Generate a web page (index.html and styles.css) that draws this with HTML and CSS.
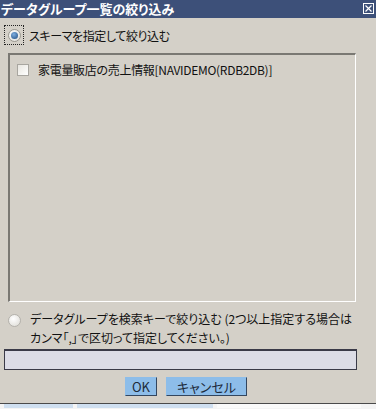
FILE: index.html
```html
<!DOCTYPE html>
<html lang="ja">
<head>
    <meta charset="UTF-8">
    <meta name="viewport" content="width=device-width, initial-scale=1.0">
    <title>データグループ一覧の絞り込み</title>
    <link rel="stylesheet" href="styles.css">
</head>
<body>
<div class="dialog">
    <div class="titlebar">
        <span class="title">データグループ一覧の絞り込み</span>
        <span class="close">
            <svg width="11" height="11" viewBox="0 0 11 11">
                <rect x="0.5" y="0.5" width="10" height="10" fill="none" stroke="#fff" stroke-width="1"/>
                <path d="M2.5 2.5 L8.5 8.5 M8.5 2.5 L2.5 8.5" stroke="#fff" stroke-width="1.2"/>
            </svg>
        </span>
    </div>

    <div class="option first">
        <span class="focus"><span class="radio checked"></span></span>
        <span class="label">スキーマを指定して絞り込む</span>
    </div>

    <div class="list">
        <div class="item">
            <span class="check"></span>
            <span class="item-text">家電量販店の売上情報[NAVIDEMO(RDB2DB)]</span>
        </div>
    </div>

    <div class="option second">
        <span class="radio"></span>
        <span class="label">データグループを検索キーで絞り込む (2つ以上指定する場合は<br>カンマ「,」で区切って指定してください。)</span>
    </div>

    <input type="text" class="keyword">

    <div class="buttons">
        <button class="btn ok">OK</button>
        <button class="btn cancel">キャンセル</button>
    </div>

    <div class="taskbar">
        <span class="task t1"></span>
        <span class="task t2"></span>
        <span class="task t3"></span>
    </div>
</div>
</body>
</html>
```

FILE: styles.css
```css
body {
    margin: 0;
    font-family: "Noto Sans CJK JP", "Noto Sans", sans-serif;
    font-size: 12px;
    font-feature-settings: "palt";
    color: #111;
}
.dialog {
    width: 376px;
    height: 409px;
    background: #d4d0c8;
    display: flex;
    flex-direction: column;
    overflow: hidden;
}
.titlebar {
    height: 18px;
    flex-shrink: 0;
    background: #3d5079;
    display: flex;
    align-items: center;
    justify-content: space-between;
    padding: 0 2px 0 1px;
}
.title {
    color: #fff;
    font-size: 13px;
    font-weight: bold;
    line-height: 18px;
}
.close {
    display: flex;
    margin-top: -2px;
}

.option {
    display: flex;
    align-items: flex-start;
}
.option.first {
    margin: 7px 0 0 4px;
    align-items: center;
}
.focus {
    width: 18px;
    height: 18px;
    border: 1px dotted #222;
    display: flex;
    align-items: center;
    justify-content: center;
}
.option.first .label {
    margin-left: 5px;
    font-size: 12px;
    letter-spacing: -0.4px;
}
.radio {
    width: 11px;
    height: 11px;
    border-radius: 50%;
    border: 1px solid #9a9890;
    background: radial-gradient(circle at 40% 35%, #ffffff, #dcdad4);
    display: inline-block;
    position: relative;
    flex-shrink: 0;
}
.radio.checked::after {
    content: "";
    position: absolute;
    left: 2px;
    top: 2px;
    width: 7px;
    height: 7px;
    border-radius: 50%;
    background: radial-gradient(circle at 40% 35%, #7eaee0, #1f4c80);
}

.list {
    margin: 8px 0 0 8px;
    width: 348px;
    height: 249px;
    box-sizing: border-box;
    border-top: 2px solid #7a7873;
    border-left: 2px solid #7a7873;
    border-right: 1px solid #fff;
    border-bottom: 1px solid #fff;
    padding: 8px 0 0 7px;
}
.item {
    display: flex;
    align-items: center;
}
.check {
    width: 10px;
    height: 10px;
    border: 1px solid #a8a6a0;
    background: linear-gradient(135deg, #e8e6e0, #ffffff);
}
.item-text {
    margin-left: 9px;
    font-size: 12px;
    line-height: 14px;
    letter-spacing: -0.3px;
}

.option.second {
    margin: 7px 0 0 8px;
}
.option.second .radio {
    margin-top: 5px;
    border-color: #b4b2ac;
}
.option.second .label {
    margin-left: 9px;
    line-height: 19px;
    font-size: 12px;
}

.keyword {
    margin: 2px 0 0 4px;
    width: 353px;
    height: 21px;
    box-sizing: border-box;
    border: 1px solid #3a3a48;
    border-top-width: 2px;
    background: #dcdce6;
    padding: 0 4px;
}

.buttons {
    margin-top: 7px;
    display: flex;
    gap: 9px;
    padding-left: 125px;
}
.btn {
    height: 19px;
    padding: 0;
    box-sizing: border-box;
    background: #8dbde9;
    border: 1px solid #8dbde9;
    border-right-color: #33465e;
    border-bottom-color: #33465e;
    font-family: "Noto Sans CJK JP", "Noto Sans", sans-serif;
    font-feature-settings: "palt";
    font-size: 13px;
    color: #1c2a3a;
    line-height: 16px;
}
.ok {
    width: 32px;
}
.cancel {
    width: 81px;
}

.taskbar {
    margin-top: auto;
    height: 5px;
    border-top: 1px solid #4a4a4a;
    background: #f4f4f4;
    display: flex;
    gap: 4px;
    padding-left: 4px;
}
.task {
    height: 4px;
    background: #cfdff0;
}
.t1 { width: 69px; }
.t2 { width: 136px; }
.t3 { width: 144px; background: #fafafa; }
```
